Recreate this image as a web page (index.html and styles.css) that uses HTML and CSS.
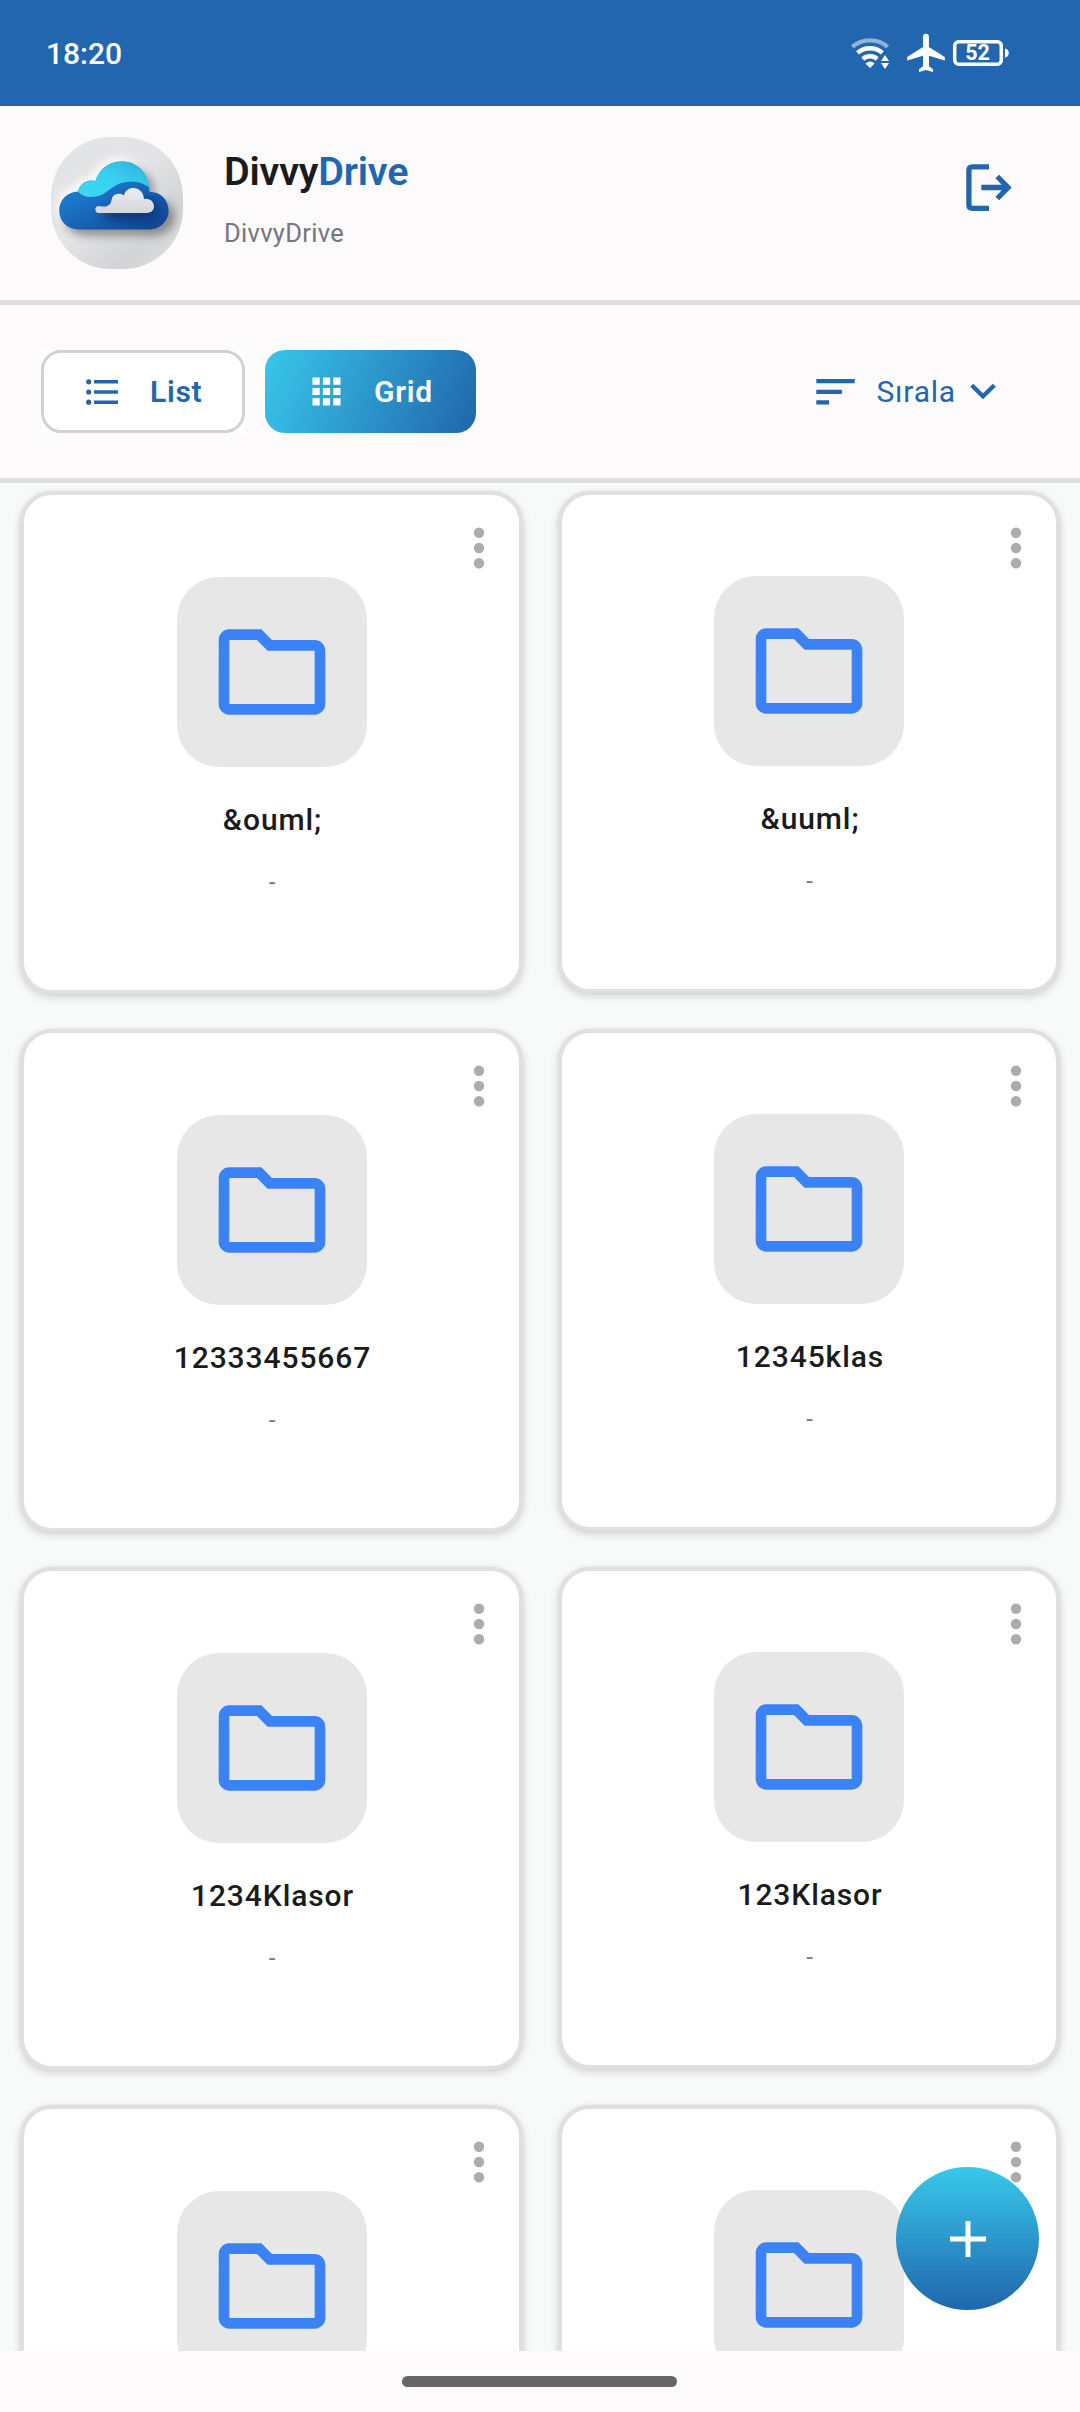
FILE: index.html
```html
<!DOCTYPE html>
<html lang="tr">
<head>
<meta charset="utf-8">
<title>DivvyDrive</title>
<link rel="stylesheet" href="styles.css">
</head>
<body>
<svg class="defs" width="0" height="0">
  <symbol id="folder" viewBox="0 0 24 24"><path d="M9.17 6l2 2H20v10H4V6h5.17M10 4H4c-1.1 0-1.99.9-1.99 2L2 18c0 1.1.9 2 2 2h16c1.1 0 2-.9 2-2V8c0-1.1-.9-2-2-2h-8l-2-2z"/></symbol>
  <symbol id="dots" viewBox="0 0 12 42"><circle cx="6" cy="5.7" r="5.2"/><circle cx="6" cy="21" r="5.2"/><circle cx="6" cy="36.3" r="5.2"/></symbol>
</svg>
<div class="screen">
  <div class="status">
    <span class="time">18:20</span>
    <svg class="status-icons" width="160" height="40" viewBox="850 33 160 40">
      <g fill="none" stroke="#fff" stroke-width="4.4">
        <path d="M852.4 46.9C862 38.2 878 38.2 887.6 46.9" opacity=".5"/>
        <path d="M857.6 52.9C864.5 46.6 875.5 46.6 882.4 52.9"/>
        <path d="M862.8 59C867 55.3 873 55.3 877.2 59"/>
      </g>
      <path fill="#fff" d="M865.4 63.4Q870 59.600 874.6 63.4L870 68zM881 61l4-6 4 6zM881 63h8l-4 6z"/>
      <path fill="#fff" d="M944.8 60.6v-3.7L928.9 47V36.6a2.95 2.95 0 0 0-5.9 0V47L907.2 56.9v3.7L923 55.8v10.4l-4 3v2.7l7-2 7 2v-2.7l-4-3V55.8z"/>
      <rect x="954.7" y="41.7" width="46.6" height="22.600" rx="4" fill="none" stroke="#fff" stroke-width="3.500"/>
      <path fill="#fff" d="M1005 48.5c5 0 5 9 0 9z"/>
      <text class="battery" x="977.5" y="60.300" text-anchor="middle">52</text>
    </svg>
  </div>
  <header class="header">
    <svg class="avatar" viewBox="0 0 132 132">
      <defs>
        <linearGradient id="bg" x1="0" y1="0" x2="1" y2="1"><stop offset="0" stop-color="#e3e4e5"/><stop offset=".45" stop-color="#e4e4e6"/><stop offset=".75" stop-color="#d2d3d5"/><stop offset="1" stop-color="#e0e2e3"/></linearGradient>
        <linearGradient id="cyan" x1="0" y1="1" x2="1" y2="0"><stop offset="0" stop-color="#3bd8f2"/><stop offset=".5" stop-color="#38d2f0"/><stop offset="1" stop-color="#2bb0d8"/></linearGradient>
        <linearGradient id="blue" x1="0" y1="0" x2=".8" y2="1"><stop offset="0" stop-color="#2390dc"/><stop offset=".5" stop-color="#1b6fc2"/><stop offset="1" stop-color="#124796"/></linearGradient>
        <linearGradient id="white" x1="0" y1="0" x2="0" y2="1"><stop offset="0" stop-color="#ededf2"/><stop offset="1" stop-color="#d5d6de"/></linearGradient>
        <filter id="soft" x="-30%" y="-30%" width="160%" height="160%"><feGaussianBlur stdDeviation="4"/></filter>
        <clipPath id="mask"><rect width="132" height="132" rx="60"/></clipPath>
        <path id="cloud" d="M28 92.5C16 92.5 8.2 84 8.2 73.5S16 55 27 54.5C29 46 37 42 44.5 44C48 32 58 24.5 71 24.5C87 24.5 98 37 98.5 55C109 54 117.6 63 117.6 73.5S109 92.5 98 92.5z"/>
      </defs>
      <g clip-path="url(#mask)">
        <rect width="132" height="132" fill="url(#bg)"/>
        <use href="#cloud" x="-3" y="-4" fill="#fff" opacity=".8" filter="url(#soft)"/>
        <use href="#cloud" x="6" y="6" fill="#58585b" opacity=".6" filter="url(#soft)"/>
        <use href="#cloud" fill="url(#blue)"/>
        <path fill="url(#cyan)" d="M27 54.5C29 46 37 42 44.5 44C48 32 58 24.5 71 24.5C86 24.5 97 35 98.3 50.5C91 44.500 80 43 70 46C58 50 54 60 41 60C34 60 30 58 27 54.500z"/>
        <path fill="#0b2c68" opacity=".7" filter="url(#soft)" d="M50 77C56 74 65 70 76 62H101L108 72L100 83H60z"/>
        <path fill="url(#white)" d="M47.500 76C43.500 76 43 69 48 69C57 71 60 68 61 61C63 56 70 56 73 58.500C75 48 92 48 93 62C99 61 103 65 103 69.500S99 76 95 76z"/>
      </g>
    </svg>
    <div class="titles">
      <h1 class="brand">Divvy<span class="brand-accent">Drive</span></h1>
      <p class="account">DivvyDrive</p>
    </div>
    <svg class="logout" width="46" height="48" viewBox="0 0 46 48" fill="none" stroke="#2166ae" stroke-width="5.3"><path d="M23 2.900H6.500Q2.900 2.900 2.900 6.500V41Q2.900 44.300 6.500 44.300H23M15.300 23.500H42M31.300 12.500L42 23.500L31.300 34.500"/></svg>
  </header>
  <div class="toolbar">
    <div class="list-wrap"><button class="tab tab-list">
      <svg width="32" height="28" viewBox="0 0 32 28" fill="#2166ae"><circle cx="2.700" cy="3.800" r="2.600"/><circle cx="2.700" cy="14" r="2.600"/><circle cx="2.700" cy="24.200" r="2.600"/><path d="M8 2.100h24v3.400H8zM8 12.300h24v3.400H8zM8 22.500h24v3.400H8z"/></svg>
      <span>List</span>
    </button></div>
    <button class="tab tab-grid">
      <svg width="29" height="29" viewBox="0 0 29 29" fill="#fff"><path d="M.5.5h7.200v7.200H.5zM10.900.5h7.200v7.200h-7.200zM21.300.5h7.200v7.200h-7.200zM.5 10.900h7.200v7.200H.5zM10.900 10.900h7.200v7.200h-7.200zM21.300 10.900h7.200v7.200h-7.200zM.5 21.300h7.200v7.200H.5zM10.900 21.300h7.200v7.200h-7.200zM21.300 21.300h7.200v7.200h-7.200z"/></svg>
      <span>Grid</span>
    </button>
    <button class="sort">
      <svg width="39" height="26" viewBox="0 0 39 26" fill="#2166ae"><path d="M.3 0h38.400v4.300H.3zM.3 10.700h25.600V15H.3zM.3 21.300h12.800v4.300H.3z"/></svg>
      <span class="sort-label">Sırala</span>
      <svg width="26" height="17" viewBox="0 0 26 17" fill="none" stroke="#2166ae" stroke-width="4.300"><path d="M1.700 2.200L13 13.200L24.300 2.200"/></svg>
    </button>
  </div>
  <main class="files">
    <div class="card"><svg class="more"><use href="#dots"/></svg><div class="tile"><svg class="folder"><use href="#folder"/></svg></div><div class="name">&amp;ouml;</div><div class="size">-</div></div>
    <div class="card"><svg class="more"><use href="#dots"/></svg><div class="tile"><svg class="folder"><use href="#folder"/></svg></div><div class="name">&amp;uuml;</div><div class="size">-</div></div>
    <div class="card"><svg class="more"><use href="#dots"/></svg><div class="tile"><svg class="folder"><use href="#folder"/></svg></div><div class="name">12333455667</div><div class="size">-</div></div>
    <div class="card"><svg class="more"><use href="#dots"/></svg><div class="tile"><svg class="folder"><use href="#folder"/></svg></div><div class="name">12345klas</div><div class="size">-</div></div>
    <div class="card"><svg class="more"><use href="#dots"/></svg><div class="tile"><svg class="folder"><use href="#folder"/></svg></div><div class="name">1234Klasor</div><div class="size">-</div></div>
    <div class="card"><svg class="more"><use href="#dots"/></svg><div class="tile"><svg class="folder"><use href="#folder"/></svg></div><div class="name">123Klasor</div><div class="size">-</div></div>
    <div class="card"><svg class="more"><use href="#dots"/></svg><div class="tile"><svg class="folder"><use href="#folder"/></svg></div></div>
    <div class="card"><svg class="more"><use href="#dots"/></svg><div class="tile"><svg class="folder"><use href="#folder"/></svg></div></div>
  </main>
  <div class="navbar"><div class="pill"></div></div>
  <button class="fab"><svg width="36" height="36" viewBox="0 0 36 36"><path d="M15.500 0h5v15.500H36v5H20.500V36h-5V20.500H0v-5h15.500z" fill="#fff"/></svg></button>
</div>
</body>
</html>
```
FILE: styles.css
```css
* { box-sizing: border-box; margin: 0; padding: 0; }
body { font-family: Roboto, "Noto Sans", sans-serif; background: #f8faf9; }
button { font: inherit; border: 0; background: none; }
svg { display: block; flex: none; }
.defs { position: absolute; }
.screen { position: relative; width: 1080px; height: 2412px; overflow: hidden; display: flex; flex-direction: column; }

.status { height: 106px; flex: none; background: #2166ae; display: flex; justify-content: space-between; align-items: center; padding: 0 70px 0 46px; }
.time { font-size: 30px; font-weight: 500; color: #fff; line-height: 36px; padding-top: 2px; }
.battery { font: 700 21.500px Roboto, sans-serif; fill: #fff; }

.header { height: 199px; flex: none; background: #fcfafb; border-bottom: 5px solid #dedede; display: flex; padding: 31px 68px 0 51px; }
.avatar { width: 132px; height: 132px; }
.titles { margin-left: 41px; flex: 1; }
.brand { font-size: 39.500px; line-height: 46px; font-weight: 600; color: #1b1b1c; padding-top: 12px; letter-spacing: -.2px; }
.brand-accent { color: #2166ae; }
.account { font-size: 25.500px; line-height: 30px; color: #767580; margin-top: 23px; letter-spacing: .3px; }
.logout { margin-top: 27px; }

.toolbar { height: 178px; flex: none; background: #fcfafb; border-bottom: 5px solid #dedede; display: flex; align-items: center; padding: 0 84px 0 41px; }
.list-wrap { background: #fff; margin-right: 20px; }
.tab { height: 83px; display: flex; align-items: center; border-radius: 20px; font-size: 30px; font-weight: 600; letter-spacing: .7px; }
.tab-list { width: 204px; border: 3px solid #d1d3d3; color: #2166ae; padding-left: 42px; gap: 32px; background: #fff; }
.tab-grid { width: 211px; color: #fff; padding-left: 47px; gap: 33px; background: linear-gradient(112deg, #38c7ea, #2066ac); }
.sort { margin-left: auto; display: flex; align-items: center; color: #2166ae; font-size: 30px; letter-spacing: .8px; }
.sort-label { margin: 0 14px 0 21px; }

.files { flex: 1; min-height: 0; overflow: hidden; display: grid; grid-template-columns: 503px 502px; grid-auto-rows: 503px; gap: 35px; padding: 8px 20px 0; align-content: start; }
.card { position: relative; border: 4.500px solid #e0e0e0; border-radius: 32px; background: #fff; box-shadow: 0 3px 8px rgba(0,0,0,.16), 0 0 2px rgba(0,0,0,.08); display: flex; flex-direction: column; align-items: center; padding-top: 82px; }
.card:nth-child(even) { height: 502px; padding-top: 81px; }
.more { position: absolute; top: 31.500px; right: 34.500px; width: 12px; height: 42px; fill: #acacac; }
.tile { width: 190px; height: 190px; border-radius: 42px; background: #e7e7e7; display: flex; align-items: center; justify-content: center; }
.folder { width: 128px; height: 128px; fill: #3b82f6; }
.name { margin-top: 35px; padding-left: 2px; font-size: 30px; line-height: 36px; font-weight: 550; letter-spacing: .9px; color: #1b1b1c; }
.size { margin-top: 30px; padding-left: 1px; font-size: 24px; line-height: 28px; color: #767580; }

.navbar { height: 61px; flex: none; background: #fcfafb; display: flex; justify-content: center; padding: 25px 1px 0 0; }
.pill { width: 275px; height: 10.500px; border-radius: 5.500px; background: #666; }
.fab { position: absolute; left: 896px; top: 2167px; width: 143px; height: 143px; border-radius: 50%; background: linear-gradient(#38c8eb, #2066ac); display: flex; align-items: center; justify-content: center; }
```
